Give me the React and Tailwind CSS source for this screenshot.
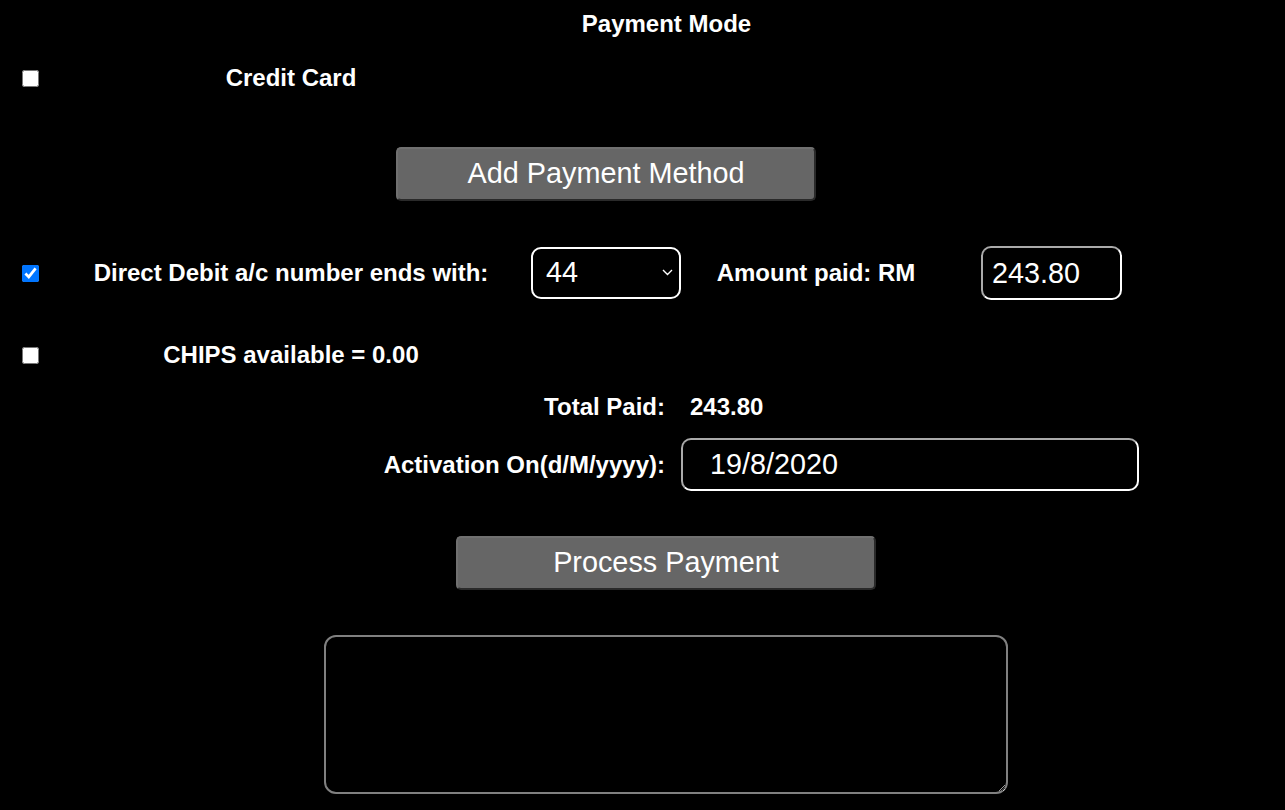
export default function App() {
  const font = "font-['Liberation_Sans',Arial,sans-serif]";
  const labelCls = "text-[24px] font-bold text-white";
  const btnCls =
    "h-[54px] w-[420px] rounded-[5px] border-2 border-t-[#707070] border-l-[#707070] border-r-[#2a2a2a] border-b-[#2a2a2a] bg-[#666] text-[28.8px] text-white";

  return (
    <div className={`min-h-screen bg-black text-white ${font}`}>
      {/* heading */}
      <div className="pl-[48px] pt-[10px] text-center text-[24px] font-bold leading-[28px]">Payment Mode</div>

      {/* credit card */}
      <div className="mt-[20px] flex h-[40px] items-center">
        <input type="checkbox" className="ml-[22px] h-[17px] w-[17px] accent-[#0075ff]" />
        <div className={`ml-[21px] w-[462px] text-center ${labelCls}`}>Credit Card</div>
      </div>

      <div className="mt-[49px] flex">
        <button className={`ml-[396px] ${btnCls}`}>Add Payment Method</button>
      </div>

      {/* direct debit */}
      <div className="mt-[45px] flex h-[54px] items-center">
        <input type="checkbox" defaultChecked className="ml-[22px] h-[17px] w-[17px] accent-[#0075ff]" />
        <div className={`ml-[21px] mr-[9px] w-[462px] text-center ${labelCls}`}>Direct Debit a/c number ends with:</div>
        <div className="relative h-[52px] w-[150px]">
          <select
            defaultValue="44"
            className="h-full w-full appearance-none rounded-[10px] border-2 border-white bg-black pl-[13px] text-[28.8px] text-white outline-none"
          >
            <option value="44">44</option>
          </select>
          <svg
            className="pointer-events-none absolute right-[8px] top-[22px]"
            width="11"
            height="7"
            viewBox="0 0 11 7"
            fill="none"
            stroke="white"
            strokeWidth="1.4"
          >
            <path d="M1 1l4.5 4.5L10 1" />
          </svg>
        </div>
        <div className={`w-[270px] text-center ${labelCls}`}>Amount paid: RM</div>
        <input
          defaultValue="243.80"
          className="ml-[30px] h-[54px] w-[141px] rounded-[10px] border-2 border-t-[#aaa] border-l-[#aaa] border-r-white border-b-white bg-black pl-[9px] text-[28.8px] text-white outline-none"
        />
      </div>

      {/* chips */}
      <div className="mt-[35px] flex h-[40px] items-center">
        <input type="checkbox" className="ml-[22px] h-[17px] w-[17px] accent-[#0075ff]" />
        <div className={`ml-[21px] w-[462px] text-center ${labelCls}`}>CHIPS available = 0.00</div>
      </div>

      {/* total paid */}
      <div className="mt-[17px] flex h-[30px] items-center">
        <div className={`w-[665px] text-right ${labelCls}`}>Total Paid:</div>
        <div className={`ml-[25px] ${labelCls}`}>243.80</div>
      </div>

      {/* activation */}
      <div className="mt-[16px] flex h-[53px] items-center">
        <div className={`w-[665px] text-right ${labelCls}`}>Activation On(d/M/yyyy):</div>
        <input
          defaultValue="19/8/2020"
          className="ml-[16px] h-[53px] w-[458px] rounded-[10px] border-2 border-t-[#aaa] border-l-[#aaa] border-r-white border-b-white bg-black pl-[27px] text-[28.8px] text-white outline-none"
        />
      </div>

      <div className="mt-[45px] flex">
        <button className={`ml-[456px] ${btnCls}`}>Process Payment</button>
      </div>

      <div className="mt-[45px] flex">
        <textarea className="ml-[324px] h-[159px] w-[684px] rounded-[12px] border-2 border-[#808080] bg-black text-white outline-none" />
      </div>
    </div>
  );
}
